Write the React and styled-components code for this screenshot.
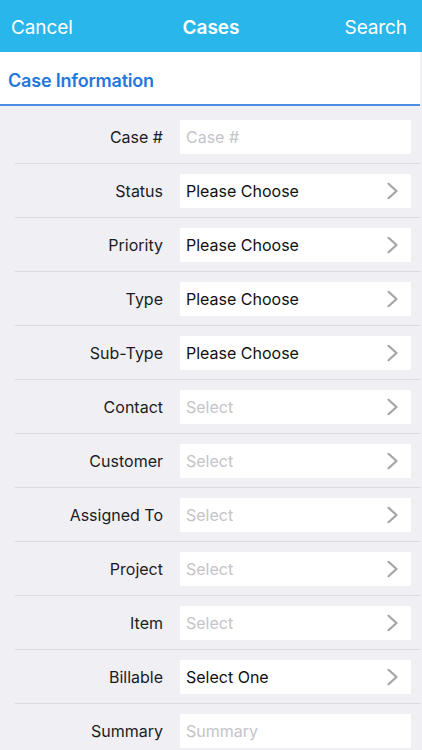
import React from "react";
import styled, { createGlobalStyle } from "styled-components";

const Global = createGlobalStyle`
  html, body { margin: 0; padding: 0; background: #efeff4; }
  body { font-family: Inter, "Noto Sans", "Liberation Sans", sans-serif; -webkit-font-smoothing: antialiased; }
  * { box-sizing: border-box; }
`;

const Screen = styled.div`
  width: 422px;
  height: 750px;
  overflow: hidden;
  background: #efeff4;
  display: flex;
  flex-direction: column;
`;

const NavBar = styled.div`
  flex: 0 0 52px;
  height: 52px;
  background: #29b7eb;
  display: flex;
  align-items: center;
  justify-content: space-between;
  padding: 2px 15px 0 11px;
  color: #fff;
  font-size: 19px;
  position: relative;
`;

const NavButton = styled.span`
  font-weight: 400;
  letter-spacing: -0.1px;
`;

const NavTitle = styled.span`
  position: absolute;
  left: 0;
  right: 0;
  text-align: center;
  font-weight: 600;
  pointer-events: none;
`;

const SectionHeader = styled.div`
  flex: 0 0 54px;
  height: 54px;
  background: #fff;
  display: flex;
  align-items: center;
  padding: 5px 8px 0;
  border-bottom: 2px solid #4a8fe4;
  width: 420px;
  color: #1f78dc;
  font-size: 18px;
  font-weight: 600;
  letter-spacing: -0.2px;
`;

const List = styled.div`
  flex: 0 0 auto;
  padding-top: 4px;
  display: flex;
  flex-direction: column;
`;

const Row = styled.div`
  flex: 0 0 auto;
  display: grid;
  grid-template-columns: 163px 231px;
  column-gap: 17px;
  align-items: center;
  padding: 10px 0 9px;
  margin-bottom: 1px;
  position: relative;
  &::after {
    content: "";
    position: absolute;
    left: 15px;
    right: 2px;
    bottom: -1px;
    height: 1px;
    background: #d9d9de;
  }
`;

const Label = styled.div`
  text-align: right;
  font-size: 16px;
  color: #1c1c1e;
`;

const Field = styled.div`
  height: 34px;
  background: #fff;
  display: flex;
  align-items: center;
  justify-content: space-between;
  padding: 0 11px 0 6px;
  font-size: 16px;
  color: ${(p) => (p.$placeholder ? "#c4c4c9" : "#111")};
`;

const Chevron = () => (
  <svg width="14" height="18" viewBox="0 0 14 18">
    <path d="M2.5 1.8 L10.5 9 L2.5 16.2" fill="none" stroke="#a4a4a8" strokeWidth="2.2" strokeLinecap="round" strokeLinejoin="round" />
  </svg>
);

const rows = [
  { label: "Case #", value: "Case #", ph: true, chev: false },
  { label: "Status", value: "Please Choose", ph: false, chev: true },
  { label: "Priority", value: "Please Choose", ph: false, chev: true },
  { label: "Type", value: "Please Choose", ph: false, chev: true },
  { label: "Sub-Type", value: "Please Choose", ph: false, chev: true },
  { label: "Contact", value: "Select", ph: true, chev: true },
  { label: "Customer", value: "Select", ph: true, chev: true },
  { label: "Assigned To", value: "Select", ph: true, chev: true },
  { label: "Project", value: "Select", ph: true, chev: true },
  { label: "Item", value: "Select", ph: true, chev: true },
  { label: "Billable", value: "Select One", ph: false, chev: true },
  { label: "Summary", value: "Summary", ph: true, chev: false },
];

export default function App() {
  return (
    <Screen>
      <Global />
      <NavBar>
        <NavButton>Cancel</NavButton>
        <NavTitle>Cases</NavTitle>
        <NavButton>Search</NavButton>
      </NavBar>
      <SectionHeader>Case Information</SectionHeader>
      <List>
        {rows.map((r) => (
          <Row key={r.label}>
            <Label>{r.label}</Label>
            <Field $placeholder={r.ph}>
              <span>{r.value}</span>
              {r.chev && <Chevron />}
            </Field>
          </Row>
        ))}
      </List>
    </Screen>
  );
}
